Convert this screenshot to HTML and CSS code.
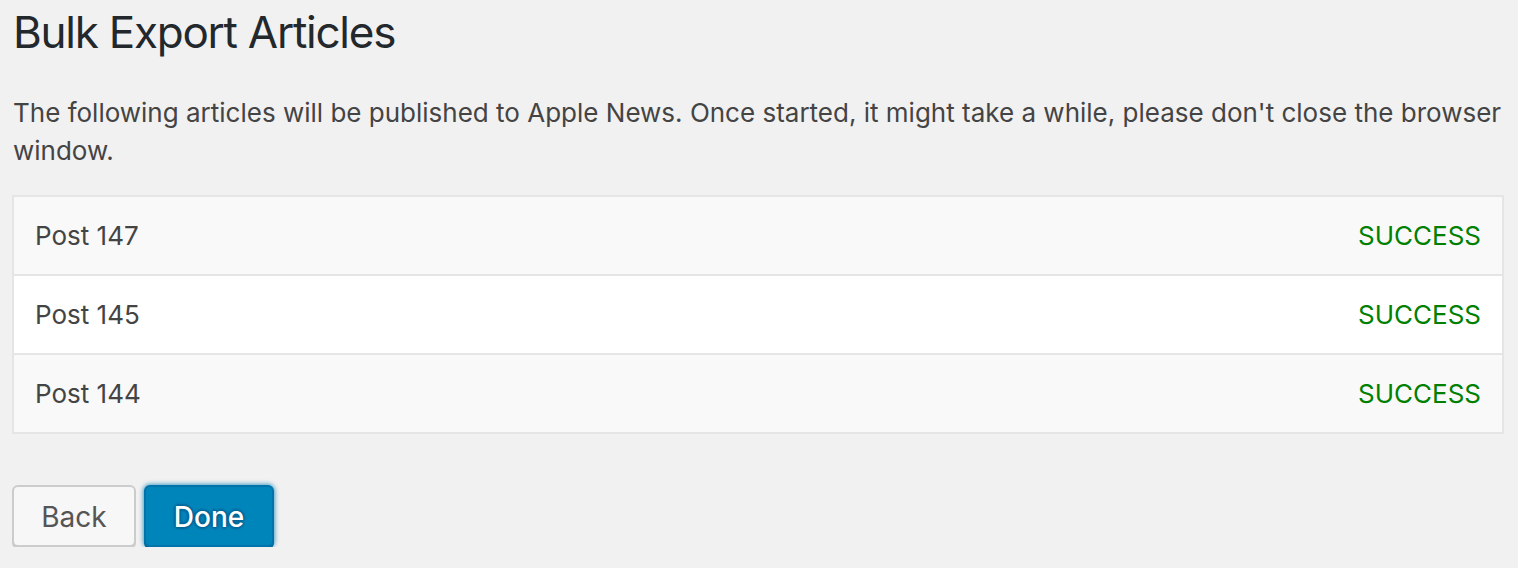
FILE: index.html
```html
<!DOCTYPE html>
<html>
<head>
<meta charset="utf-8">
<link rel="stylesheet" href="styles.css">
</head>
<body>
<div class="wrap">
  <h1 class="title">Bulk Export Articles</h1>
  <p class="intro">The following articles will be published to Apple News. Once started, it might take a while, please don't close the browser window.</p>
  <ul class="list">
    <li class="row alt"><span class="name">Post 147</span><span class="status">SUCCESS</span></li>
    <li class="row"><span class="name">Post 145</span><span class="status">SUCCESS</span></li>
    <li class="row alt"><span class="name">Post 144</span><span class="status">SUCCESS</span></li>
  </ul>
  <div class="actions">
    <button class="btn btn-secondary">Back</button>
    <button class="btn btn-primary">Done</button>
  </div>
</div>
</body>
</html>
```
FILE: styles.css
```css
html, body {
  margin: 0;
  padding: 0;
  background: #f1f1f1;
}
body {
  font-family: Inter, "Open Sans", "Liberation Sans", sans-serif;
  color: #23282d;
}
.wrap {
  padding: 0 14px 0 12px;
}
.title {
  margin: 0;
  padding: 4px 0 0 1px;
  font-size: 44px;
  font-weight: 400;
  letter-spacing: -1.25px;
  line-height: 56px;
  color: #23282d;
}
.intro {
  margin: 34px 0 0 1px;
  font-size: 26px;
  line-height: 38px;
  color: #444;
}
.list {
  list-style: none;
  margin: 25px 0 0 0;
  padding: 0;
  border: 2px solid #e5e5e5;
  background: #fff;
}
.row {
  display: flex;
  justify-content: space-between;
  align-items: center;
  height: 77px;
  padding: 0 21px;
  font-size: 26px;
  color: #444;
  background: #fff;
}
.row + .row {
  border-top: 2px solid #e5e5e5;
}
.row.alt {
  background: #f9f9f9;
}
.status {
  color: #008000;
}
.actions {
  display: flex;
  gap: 8px;
  margin-top: 51px;
}
.btn {
  font-family: inherit;
  font-size: 28px;
  height: 62px;
  padding: 2px 27px 0;
  border-radius: 6px;
  cursor: pointer;
}
.btn-secondary {
  color: #555;
  background: #f7f7f7;
  border: 2px solid #ccc;
  box-shadow: 0 2px 0 #ccc;
  width: 124px;
}
.btn-primary {
  color: #fff;
  background: #0085ba;
  border: 2px solid #0073aa;
  box-shadow: 0 2px 0 #006799, 0 0 4px 1px rgba(30, 140, 190, 0.8);
  text-shadow: 0 -2px 2px #006799, 2px 0 2px #006799, 0 2px 2px #006799, -2px 0 2px #006799;
  width: 130px;
  font-weight: 500;
}
```
